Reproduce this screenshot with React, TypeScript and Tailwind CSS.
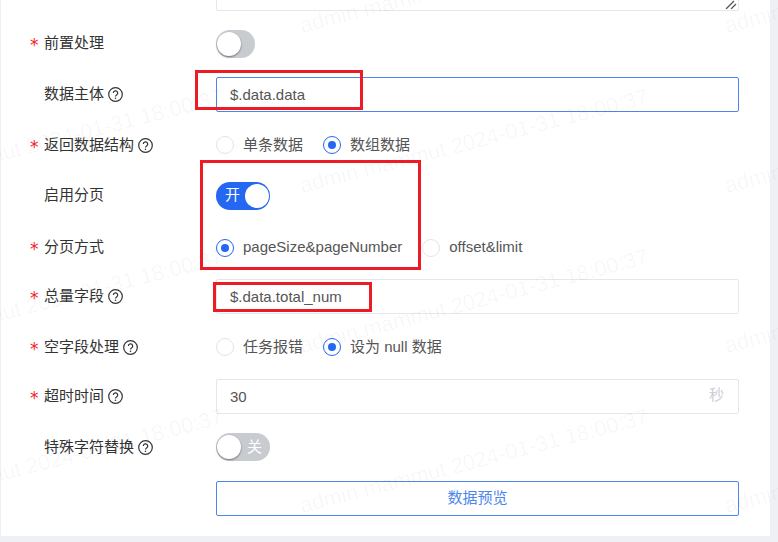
const watermarks = [
  { x: -122, y: 35 }, { x: 303, y: 35 }, { x: 728, y: 35 },
  { x: -122, y: 195 }, { x: 303, y: 195 }, { x: 728, y: 195 },
  { x: -122, y: 355 }, { x: 303, y: 355 }, { x: 728, y: 355 },
  { x: -122, y: 515 }, { x: 303, y: 515 }, { x: 728, y: 515 },
];

function Help() {
  return (
    <svg width="15" height="15" viewBox="0 0 15 15" fill="none" stroke="#333" className="ml-[4px] shrink-0">
      <circle cx="7.5" cy="7.5" r="6.8" strokeWidth="1.2" />
      <path d="M5.3 6a2.2 2.2 0 1 1 3.3 1.9c-.7.4-1.1.8-1.1 1.7" strokeWidth="1.2" />
      <circle cx="7.5" cy="11.3" r=".8" fill="#333" stroke="none" />
    </svg>
  );
}

function Row({ label, required, help, className, children }: { label: string; required?: boolean; help?: boolean; className: string; children: React.ReactNode }) {
  return (
    <div className={`flex items-center ${className}`}>
      <div className="flex w-[215px] shrink-0 items-center pl-[29px] text-[15px] text-[#333]">
        <span className="w-[14px] font-['DejaVu_Sans'] text-[17px] leading-none text-[#f5222d]">
          {required ? <span className="relative top-[2px]">*</span> : ""}
        </span>
        <span>{label}</span>
        {help && <Help />}
      </div>
      {children}
    </div>
  );
}

function Input({ value, focused, suffix }: { value: string; focused?: boolean; suffix?: string }) {
  return (
    <div className={`flex h-[35px] w-[523px] items-center justify-between rounded-[2px] border px-[13px] pt-[1px] text-[15px] text-[#555] ${focused ? "border-[#4c86ec]" : "border-[#e6e7eb]"}`}>
      <span>{value}</span>
      {suffix && <span className="mt-[-3px] mr-[1px] text-[#ccced3]">{suffix}</span>}
    </div>
  );
}

function Radio({ label, checked }: { label: string; checked?: boolean }) {
  return (
    <div className="flex items-center text-[15px] text-[#555]">
      <span className={`mr-[9px] flex size-[18px] items-center justify-center rounded-full border ${checked ? "border-[#2468f2]" : "border-[#e3e4e8]"}`}>
        {checked && <span className="size-[8px] rounded-full bg-[#2468f2]" />}
      </span>
      {label}
    </div>
  );
}

function Switch({ on, text }: { on?: boolean; text?: string }) {
  return (
    <div className={`flex h-[28px] items-center rounded-full text-[15px] text-white ${text ? "w-[54px]" : "w-[39px]"} ${on ? "justify-end bg-[#2468f2] pr-[1px]" : "bg-[#c8cbd0]"}`}>
      {on && <span className="mr-[5px]">{text}</span>}
      <span className={`rounded-full bg-white ${on ? "size-[24px]" : "ml-[1px] size-[24px] shadow-[0_1px_2px_rgba(0,0,0,0.45)]"}`} />
      {!on && text && <span className="ml-[6px]">{text}</span>}
    </div>
  );
}

function Resize() {
  return (
    <svg width="12" height="9" viewBox="0 0 12 9" stroke="#555" strokeWidth="1.3" className="absolute right-[1px] bottom-[1px]">
      <path d="M1 9 9 1M6 9l5-5" />
    </svg>
  );
}

export default function App() {
  return (
    <div className="relative h-[542px] w-[778px] overflow-hidden bg-[#eef0f6] pl-[1px] font-['Liberation_Sans','Noto_Sans_CJK_SC',sans-serif]">
      <div className="h-[536px] w-[769px] bg-white">
        <div className="ml-[215px] h-[11px] w-[523px]">
          <div className="relative h-[11px] rounded-b-[2px] border border-t-0 border-[#e6e7eb]">
            <Resize />
          </div>
        </div>
        <Row label="前置处理" required className="mt-[19px] h-[27px]"><Switch /></Row>
        <Row label="数据主体" help className="mt-[20px] h-[35px]"><Input value="$.data.data" focused /></Row>
        <Row label="返回数据结构" required help className="mt-[16px] h-[34px]">
          <div className="flex gap-[20px]"><Radio label="单条数据" /><Radio label="数组数据" checked /></div>
        </Row>
        <Row label="启用分页" className="mt-[20px] h-[27px]"><Switch on text="开" /></Row>
        <Row label="分页方式" required className="mt-[25px] h-[27px]">
          <div className="flex gap-[20px]"><Radio label="pageSize&pageNumber" checked /><Radio label="offset&limit" /></div>
        </Row>
        <Row label="总量字段" required help className="mt-[18px] h-[35px]"><Input value="$.data.total_num" /></Row>
        <Row label="空字段处理" required help className="mt-[16px] h-[34px]">
          <div className="flex gap-[20px]"><Radio label="任务报错" /><Radio label="设为 null 数据" checked /></div>
        </Row>
        <Row label="超时时间" required help className="mt-[15px] h-[35px]"><Input value="30" suffix="秒" /></Row>
        <Row label="特殊字符替换" help className="mt-[19px] h-[28px]"><Switch text="关" /></Row>
        <div className="mt-[20px] ml-[215px] flex h-[35px] w-[523px] items-center justify-center rounded-[2px] border border-[#4c86ec] text-[15px] text-[#4c86ec]">数据预览</div>
      </div>

      {watermarks.map((w) => (
        <span
          key={`${w.x}-${w.y}`}
          className="pointer-events-none absolute origin-bottom-left rotate-[-14.5deg] whitespace-nowrap text-[21.8px] leading-none text-[#000]/[0.04]"
          style={{ left: w.x, top: w.y - 20 }}
        >
          admin.mammut 2024-01-31 18:00:37
        </span>
      ))}

      <div className="absolute top-[70px] left-[195px] h-[40px] w-[168px] border-[3px] border-[#ed1c24]" />
      <div className="absolute top-[160px] left-[200px] h-[110px] w-[221px] border-[3px] border-[#ed1c24]" />
      <div className="absolute top-[282px] left-[213px] h-[30px] w-[159px] border-[3px] border-[#ed1c24]" />
    </div>
  );
}
